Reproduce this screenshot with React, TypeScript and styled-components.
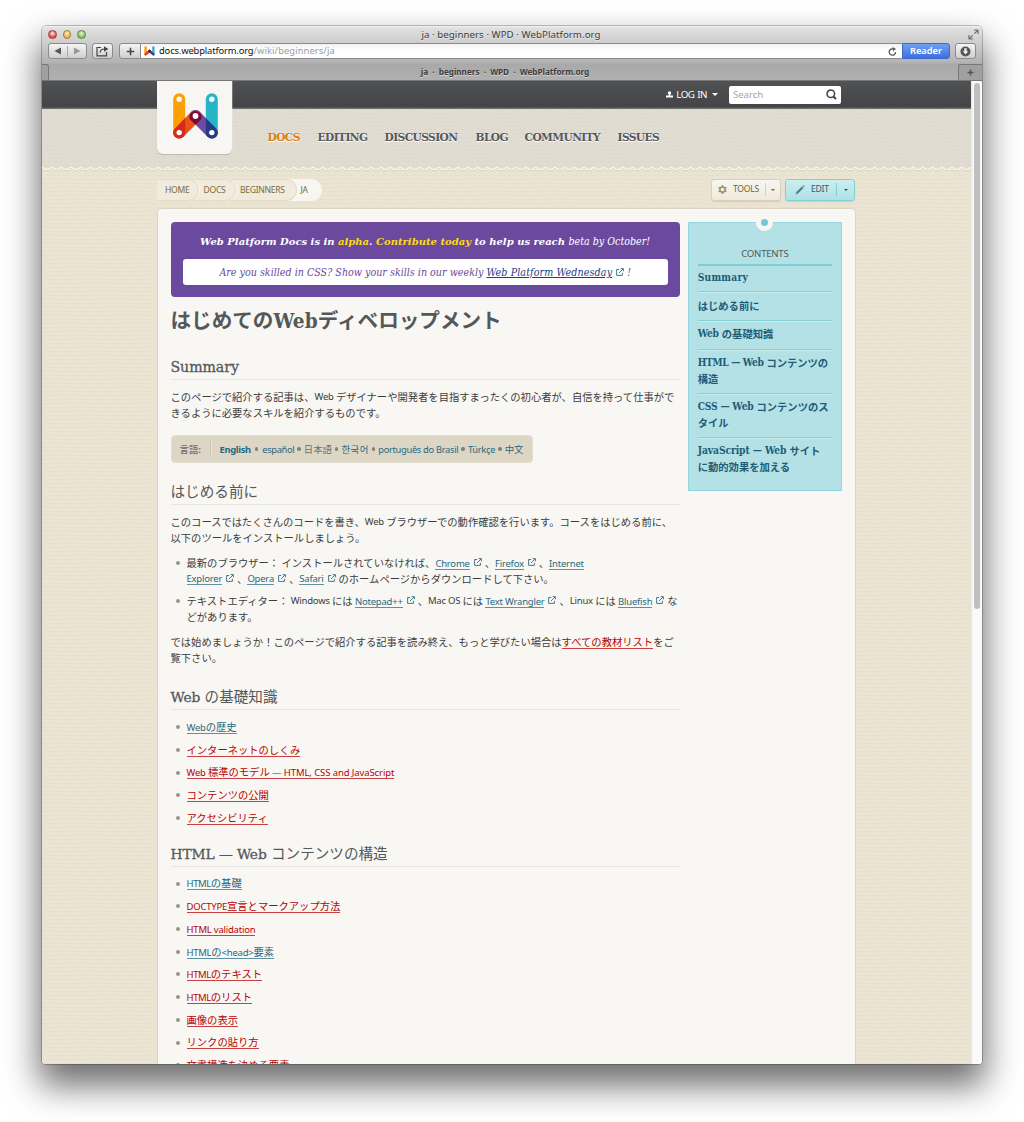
import React from 'react';
import styled, { createGlobalStyle, css } from 'styled-components';

const sans = `"Noto Sans", "Noto Sans CJK JP", sans-serif`;
const slab = `"DejaVu Serif Condensed", "DejaVu Serif", "Noto Sans CJK JP", serif`;
const wideSlab = `"DejaVu Serif", "Noto Sans CJK JP", serif`;
const weave = `repeating-linear-gradient(0deg, rgba(120,100,50,.026) 0 1px, transparent 1px 4px),
  repeating-linear-gradient(45deg, rgba(255,255,255,.1) 0 1px, transparent 1px 3px)`;

const Global = createGlobalStyle`
  html, body { margin: 0; background: #fff; }
  body { height: 1122px; overflow: hidden; font-family: ${sans}; }
  * { box-sizing: border-box; }
  svg { display: block; flex: none; }
`;

type T = { $s?: number; $ls?: number; $b?: boolean };
const Lat = styled.span<T>`
  font-family: ${sans};
  font-size: ${p => p.$s ?? 9.5}px;
  letter-spacing: ${p => p.$ls ?? -0.22}px;
  font-weight: ${p => (p.$b ? 700 : 'inherit')};
`;
const Slab = styled.span<T>`
  font-family: ${slab};
  font-stretch: condensed;
  font-size: ${p => p.$s ?? 10.2}px;
  letter-spacing: ${p => p.$ls ?? -0.2}px;
`;
const HeadSlab = styled.span<T>`
  font-family: ${wideSlab};
  font-stretch: normal;
  font-size: ${p => p.$s ?? 13.8}px;
  letter-spacing: ${p => p.$ls ?? -0.1}px;
  -webkit-text-stroke: 0.3px #55585a;
`;

const Stage = styled.div`
  padding: 26px 42px 0;
  height: 1122px;
`;
const Win = styled.div`
  width: 940px;
  height: 1038px;
  border-radius: 4px 4px 3px 3px;
  overflow: hidden;
  display: flex;
  flex-direction: column;
  box-shadow: 0 0 0 0.5px rgba(0,0,0,.45), 0 19px 34px 3px rgba(0,0,0,.57);
  background: #fff;
`;
const Chrome = styled.div`
  height: 55px;
  flex: none;
  background: linear-gradient(#f2f2f2 0, #e0e0e0 2px, #cdcdcd 17px, #b2b2b2 37px, #a9a9a9 38px, #b0b0b0 54px);
  border-bottom: 1px solid #777;
`;
const TitleRow = styled.div`
  height: 17px;
  display: grid;
  grid-template-columns: 60px 1fr 60px;
  align-items: center;
  padding: 0 3px 0 6px;
`;
const Lights = styled.div`display: flex; gap: 6px;`;
const Light = styled.i<{ $c: string; $d: string }>`
  width: 8.6px;
  height: 8.6px;
  border-radius: 50%;
  border: 1px solid ${p => p.$d};
  background: radial-gradient(circle at 50% 35%, #fff9 0, ${p => p.$c} 65%);
`;
const WinTitle = styled.div<T>`
  text-align: center;
  padding-right: 5px;
  font: ${p => (p.$b ? 700 : 400)} ${p => p.$s}px/15px ${sans};
  letter-spacing: ${p => p.$ls}px;
  color: #3c3c3c;
  text-shadow: 0 1px 0 #fff8;
  white-space: pre;
`;
const FullScreen = styled.svg`justify-self: end;`;
const ToolRow = styled.div`
  display: flex;
  height: 21px;
  align-items: flex-start;
  padding: 0 6px;
`;
const btn = css`
  display: flex;
  align-items: center;
  justify-content: center;
  height: 16px;
  border: 1px solid #8b8b8b;
  background: linear-gradient(#f4f4f4, #cfcfcf);
`;
const Btn = styled.div<{ $w: number; $ml?: number; $left?: boolean }>`
  ${btn}
  width: ${p => p.$w}px;
  margin-left: ${p => p.$ml ?? 0}px;
  border-radius: ${p => (p.$left ? '3px 0 0 3px' : '3px')};
`;
const Half = styled.div<{ $line?: boolean }>`
  flex: 1;
  height: 11px;
  display: flex;
  align-items: center;
  justify-content: center;
  border-left: ${p => (p.$line ? '1px solid #aaa' : '0')};
`;
const Address = styled.div`
  flex: 1;
  height: 16px;
  border: solid #8b8b8b;
  border-width: 1px 0;
  background: linear-gradient(#f2f2f2, #fff 6px);
  display: flex;
  align-items: center;
  padding: 0 5px 0 3px;
  gap: 4px;
  font: 9.4px/14px ${sans};
  letter-spacing: -0.15px;
  color: #111;
`;
const Path = styled.span`color: #9c9c9c; letter-spacing: 0.08px;`;
const Url = styled.div`flex: 1; white-space: nowrap;`;
const Reader = styled.div`
  width: 48px;
  height: 16px;
  background: linear-gradient(#6f9ff2, #3d6fdd);
  border: 1px solid #3e69c9;
  border-radius: 0 3px 3px 0;
  color: #fff;
  font: 600 9.3px/14px ${sans};
  text-align: center;
`;
const TabRow = styled.div`
  height: 16px;
  display: grid;
  grid-template-columns: 7px 1fr 24px;
`;
const TabTitle = styled(WinTitle)`padding: 0 0 0 3px;`;
const TabEdge = styled.div<{ $right?: boolean }>`
  border: 1px solid #777;
  border-width: ${p => (p.$right ? '1px 0 0 1px' : '1px 1px 0 0')};
  border-radius: ${p => (p.$right ? '3px 0 0 0' : '0 3px 0 0')};
  background: #a0a0a0;
  display: flex;
  align-items: center;
  justify-content: center;
`;
const View = styled.div`
  flex: 1;
  min-height: 0;
  display: flex;
  overflow: hidden;
`;
const Page = styled.div`
  width: 929px;
  background: ${weave}, #eae3d1;
  overflow: hidden;
`;
const Scroll = styled.div`
  width: 11px;
  background: linear-gradient(90deg, #e4e4e4, #fafafa 2px);
  padding: 2px 2px 0 3px;
`;
const Thumb = styled.div`height: 526px; width: 6px; border-radius: 3px; background: #bfbfbf;`;

const Header = styled.header`
  height: 85px;
  display: flex;
  padding-left: 115px;
  background: linear-gradient(#515254, #434446 26px, #6b6b6b 27px, #6b6b6b 28px, transparent 28px), ${weave}, #e0dbd0;
`;
const LogoCard = styled.div`
  width: 75px;
  height: 72.5px;
  background: #f8f6f2;
  border-radius: 0 0 6px 6px;
  box-shadow: 0 1px 1px rgba(0,0,0,.16), 1px 0 0 rgba(255,255,255,.25);
  display: flex;
  justify-content: center;
  padding: 12px 0 0 1px;
`;
const HeadCol = styled.div`flex: 1; display: flex; flex-direction: column;`;
const TopRow = styled.div`
  height: 27px;
  display: flex;
  justify-content: flex-end;
  align-items: center;
  padding-right: 130px;
  color: #fff;
`;
const Search = styled.div`
  width: 112px;
  height: 18px;
  margin-left: 11px;
  background: #fff;
  border-radius: 2px;
  display: flex;
  align-items: center;
  justify-content: space-between;
  padding: 0 4px 0 4px;
  font: 9.6px/18px ${sans};
  letter-spacing: -0.05px;
  color: #a5a5a5;
`;
const Login = styled.div`
  display: flex;
  align-items: center;
  gap: 3px;
  font: 9.8px/18px ${sans};
  letter-spacing: -0.55px;
  word-spacing: 1px;
`;
const LoginText = styled.span`margin-right: 2px;`;
const Caret = styled.i<{ $c: string; $s?: number }>`
  width: 0;
  height: 0;
  border: ${p => p.$s ?? 3}px solid transparent;
  border-top-color: ${p => p.$c};
  border-bottom: 0;
`;
const Nav = styled.nav`
  display: flex;
  padding: 20px 0 0 35.5px;
  gap: 18px;
`;
const NavItem = styled.a<{ $on?: boolean; $w: number }>`
  width: ${p => p.$w}px;
  white-space: nowrap;
  font: 700 11.8px/18px ${slab};
  font-stretch: condensed;
  letter-spacing: -0.56px;
  color: ${p => (p.$on ? '#d6820d' : '#55585a')};
  text-shadow: 0 1px 0 #fff;
`;
const SubRow = styled.div`
  display: flex;
  justify-content: space-between;
  width: 698px;
  margin: 7px 0 0 115px;
  height: 22px;
`;
const Crumbs = styled.div`display: flex; height: 22px;`;
const Crumb = styled.a<{ $w: number; $z: number; $last?: boolean; $pl: number }>`
  position: relative;
  z-index: ${p => p.$z};
  width: ${p => p.$w}px;
  margin-right: -10px;
  height: 22px;
  padding-left: ${p => p.$pl}px;
  border-radius: 2px 11px 11px 2px;
  background: ${p => (p.$last ? '#f8f6f1' : '#f0ebdd')};
  border: 1px solid ${p => (p.$last ? '#f8f6f1' : '#e5dcc6')};
  border-left: 0;
  box-shadow: ${p => (p.$last ? 'none' : '1px 0 0 #f8f6f1')};
  font: 8.6px/21px ${sans};
  letter-spacing: -0.3px;
  color: #7a6c41;
`;
const Buttons = styled.div`display: flex; gap: 4px;`;
const Action = styled.div<{ $blue?: boolean }>`
  width: 70px;
  height: 21.5px;
  border-radius: 3px;
  border: 1px solid ${p => (p.$blue ? '#7fd0d6' : '#d8d0bb')};
  background: ${p => (p.$blue ? 'linear-gradient(#cdeef0,#afe1e5)' : 'linear-gradient(#f8f6f1,#efeadc)')};
  box-shadow: 0 1px 1px rgba(0,0,0,.1);
  color: ${p => (p.$blue ? '#2f5c66' : '#6f6338')};
  display: flex;
  align-items: center;
  padding-left: ${p => (p.$blue ? 9 : 6)}px;
  gap: 6px;
  font: 8.6px/19px ${sans};
  letter-spacing: -0.25px;
`;
const Split = styled.div<{ $c: string }>`
  margin-left: auto;
  width: 18px;
  height: 13px;
  border-left: 1px solid ${p => p.$c};
  display: flex;
  align-items: center;
  justify-content: center;
`;
const Card = styled.div`
  width: 699px;
  height: 900px;
  margin: 7px 0 0 114.5px;
  background: #f8f7f3;
  border: 1px solid #d9d4c4;
  border-radius: 4px 4px 0 0;
  padding: 13px 13px 0 13px;
  display: flex;
  gap: 8px;
`;
const Main = styled.main`width: 510px; color: #3c3c3c;`;
const Banner = styled.div`
  height: 75px;
  border-radius: 4px;
  background: #6a499f;
  padding: 7px 12px 0;
  text-align: center;
  font-style: italic;
  color: #fff;
`;
const BannerLine = styled.div`height: 20px; line-height: 20px; white-space: nowrap;`;
const Strong = styled.b`font-family: ${wideSlab}; font-size: 10px;`;
const Inner = styled.div`
  margin-top: 10px;
  height: 26px;
  line-height: 26px;
  border-radius: 3px;
  background: #fff;
  color: #6a499f;
  display: flex;
  justify-content: center;
  align-items: center;
  white-space: pre;
`;
const BannerLink = styled(Slab)`color: #263a86; text-decoration: underline;`;
const Yellow = styled.span`color: #ffdb0c;`;
const H1 = styled.h1`
  margin: 8px 0 0;
  font: 700 20.6px/30px ${sans};
  color: #55585a;
  white-space: nowrap;
`;
const H2 = styled.h2<{ $mt: number }>`
  margin: ${p => p.$mt}px 0 0;
  height: 25px;
  border-bottom: 1px solid #e6e5e3;
  font: 400 14.6px/21px "Noto Sans CJK JP", sans-serif;
  color: #55585a;
  white-space: nowrap;
`;
const P = styled.p<{ $mt: number }>`
  margin: ${p => p.$mt}px 0 0;
  font: 10.3px/15.5px "Noto Sans CJK JP", sans-serif;
  white-space: nowrap;
`;
const Line = styled.span`display: flex; align-items: center; height: 15.5px; white-space: pre;`;
const Ul = styled.ul<{ $mt: number }>`
  margin: ${p => p.$mt}px 0 0;
  padding: 0;
  list-style: none;
`;
const Li = styled.li`
  display: flex;
  gap: 6.5px;
  padding-left: 5.5px;
  margin-bottom: 7.22px;
  font: 10.3px/15.5px "Noto Sans CJK JP", sans-serif;
  &::before {
    content: '';
    flex: none;
    width: 4px;
    height: 4px;
    margin-top: 6px;
    border-radius: 50%;
    background: #99948a;
  }
`;
const Link = styled.a<{ $red?: boolean }>`
  height: 14px;
  line-height: 14px;
  color: ${p => (p.$red ? '#ba0000' : '#28687f')};
  border-bottom: 1px solid ${p => (p.$red ? '#c84040' : '#5c91a3')};
`;
const Langs = styled.div`
  margin-top: 15px;
  width: 362px;
  height: 28px;
  border-radius: 4px;
  background: #ddd6c5;
  border: 1px solid #e4dfd1;
  display: flex;
  align-items: center;
  padding-left: 8px;
  color: #6f6d68;
  font: 9.4px/16px "Noto Sans CJK JP", sans-serif;
  white-space: pre;
`;
const LangLabel = styled.div`
  font-weight: 500;
  width: 31px;
  margin-right: 9px;
  border-right: 1px solid #c9c2af;
  box-shadow: 1px 0 0 #ece7da;
`;
const LA = styled.a`color: #28687f;`;
const Korean = styled(LA)`letter-spacing: 0.4px;`;
const Dot = styled.i<{ $w?: number }>`
  width: ${p => p.$w ?? 9.6}px;
  display: flex;
  justify-content: center;
  &::before { content: ''; width: 3.4px; height: 3.4px; border-radius: 50%; background: #85817a; }
`;
const Aside = styled.aside`
  width: 154px;
  height: 269px;
  background: #b3e1e5;
  border: 1.5px solid #93d6df;
  padding: 0 8.5px 0 9px;
  color: #1e5c77;
`;
const Pin = styled.div`
  width: 17px;
  height: 17px;
  margin: -9px auto 0;
  border-radius: 50%;
  background: #f8f7f3;
  display: flex;
  align-items: center;
  justify-content: center;
  &::after { content: ''; width: 7px; height: 7px; border-radius: 50%; background: #74cad1; }
`;
const AsideTitle = styled.div`
  margin-top: 14px;
  height: 21px;
  text-align: center;
  font: 9.6px/18px ${sans};
  letter-spacing: -0.25px;
  color: #55585a;
  border-bottom: 2px solid #7ccfd5;
`;
const Toc = styled.div<{ $h: number; $end?: boolean }>`
  height: ${p => p.$h}px;
  border-bottom: ${p => (p.$end ? 0 : 1)}px solid #86cfd5;
  box-shadow: ${p => (p.$end ? 'none' : '0 1px 0 #c9ecee')};
  display: flex;
  flex-direction: column;
  justify-content: center;
  padding-bottom: 1px;
  font: 700 10.3px/15.3px "Noto Sans CJK JP", sans-serif;
  white-space: pre;
`;
const TocLine = styled.span`display: flex; align-items: center; height: 15.3px;`;

const Mark = ({ w, h }: { w: number; h: number }) => (
  <svg width={w} height={h} viewBox="0 0 45 46">
    <g strokeWidth="12" strokeLinecap="round" fill="none">
      <path d="M6.2 6.3V39.6" stroke="#fb9f07" />
      <path d="M38.8 6.3V39.6" stroke="#25b5c6" />
      <path d="M6.2 39.6L22.5 23" stroke="#ea5218" />
      <path d="M38.8 39.6L22.5 23" stroke="#6c4ba2" />
    </g>
    <path d="M0.2 39.6a6 6 0 0 1 1.8-4.2L12.2 25.3V39.6a6 6 0 0 1-12 0z" fill="#d42a20" />
    <path d="M44.8 39.6a6 6 0 0 0-1.8-4.2L32.8 25.3V39.6a6 6 0 0 0 12 0z" fill="#263a86" />
    <path d="M22.5 31.8L16.6 26A6.2 6.2 0 1 1 28.4 26z" fill="#7d0a30" />
    <g fill="#fff">
      <circle cx="6.2" cy="6.3" r="2.7" />
      <circle cx="38.8" cy="6.3" r="2.7" />
      <circle cx="22.5" cy="23" r="2.9" />
      <circle cx="6.2" cy="39.6" r="2.7" />
      <circle cx="38.8" cy="39.6" r="2.7" />
    </g>
  </svg>
);

const Favicon = () => (
  <svg width="11" height="10" viewBox="0 0 11 10" fill="none" strokeWidth="2.4" strokeLinecap="round">
    <path d="M1.6 1.4V8" stroke="#fb9f07" />
    <path d="M9.4 1.4V8" stroke="#25b5c6" />
    <path d="M1.6 8.4L5.5 5" stroke="#e0401c" />
    <path d="M9.4 8.4L5.5 5" stroke="#3c4092" />
    <circle cx="5.5" cy="5" r="1" stroke="#7d0a30" strokeWidth="1" />
  </svg>
);

const ExtBox = styled.span`display: inline-flex; align-items: center; padding: 0 3px 1px 4px;`;
const Ext = () => (
  <ExtBox>
    <svg width="8" height="8" viewBox="0 0 8 8" fill="none" stroke="#37788c" strokeWidth="0.95">
      <path d="M3.2 1.5H.6V7.4H6.4V4.8" />
      <path d="M3 5L7 1M4.7.6H7.4V3.3" />
    </svg>
  </ExtBox>
);
const E = ({ children, ls }: { children: string; ls?: number }) => (
  <><Link><Lat $ls={ls}>{children}</Lat></Link><Ext /></>
);

const Scallop = () => (
  <svg width="929" height="6">
    <defs>
      <pattern id="scallop" width="9.68" height="6" patternUnits="userSpaceOnUse">
        <path d="M0 0H9.68V1.2Q4.84 6.4 0 1.2z" fill="#dfdbce" />
        <path d="M0 2Q4.84 7.2 9.68 2" fill="none" stroke="#cfc8b6" strokeWidth="0.8" />
        <path d="M0 1Q4.84 6.2 9.68 1" fill="none" stroke="#f8f6f0" strokeWidth="1.3" />
      </pattern>
    </defs>
    <rect width="929" height="6" fill="url(#scallop)" />
  </svg>
);

const Item = ({ red, children }: { red?: boolean; children: React.ReactNode }) => (
  <Li><Line><Link $red={red}>{children}</Link></Line></Li>
);

export default function App() {
  return (
    <Stage>
      <Global />
      <Win>
        <Chrome>
          <TitleRow>
            <Lights>
              <Light $c="#e8463f" $d="#a83a36" />
              <Light $c="#f3b13c" $d="#a97b34" />
              <Light $c="#7cc04f" $d="#5b8a43" />
            </Lights>
            <WinTitle $s={9.7} $ls={0.06}>ja · beginners · WPD · WebPlatform.org</WinTitle>
            <FullScreen width="11" height="11" viewBox="0 0 11 11" fill="none" stroke="#707070" strokeWidth="1.2">
              <path d="M6 1H10V5M10 1L6.3 4.7M5 10H1V6M1 10L4.7 6.3" />
            </FullScreen>
          </TitleRow>
          <ToolRow>
            <Btn $w={39}>
              <Half><svg width="8" height="8"><path d="M7 .5V7.5L.5 4z" fill="#555" /></svg></Half>
              <Half $line><svg width="8" height="8"><path d="M1 .5V7.5L7.5 4z" fill="#999" /></svg></Half>
            </Btn>
            <Btn $w={21} $ml={5}>
              <svg width="13" height="12" viewBox="0 0 13 12" fill="none" stroke="#444" strokeWidth="1.2">
                <path d="M5 2.5H1V10.8H10.5V7" /><path d="M4 7.5Q4.5 4 8.5 4" /><path d="M8 1.2L12.4 4L8 6.8z" fill="#444" stroke="none" />
              </svg>
            </Btn>
            <Btn $w={22} $ml={6} $left>
              <svg width="9" height="9"><path d="M4.5 .8V8.2M.8 4.5H8.2" stroke="#444" strokeWidth="1.5" /></svg>
            </Btn>
            <Address>
              <Favicon />
              <Url>docs.webplatform.org<Path>/wiki/beginners/ja</Path></Url>
              <svg width="9" height="9" viewBox="0 0 9 9" fill="none" stroke="#555" strokeWidth="1.3">
                <path d="M7.6 5A3.2 3.2 0 1 1 5.5 2" /><path d="M4.6 0L8 1.9L5 4.2z" fill="#555" stroke="none" />
              </svg>
            </Address>
            <Reader>Reader</Reader>
            <Btn $w={21} $ml={5}>
              <svg width="11" height="11" viewBox="0 0 11 11">
                <circle cx="5.5" cy="5.5" r="5" fill="#555" /><path d="M4.3 2.3H6.7V5.3H8.3L5.5 8.5L2.7 5.3H4.3z" fill="#eee" />
              </svg>
            </Btn>
          </ToolRow>
          <TabRow>
            <TabEdge />
            <TabTitle $s={8.2} $ls={-0.03} $b>ja  ·  beginners  ·  WPD  ·  WebPlatform.org</TabTitle>
            <TabEdge $right><svg width="7" height="7"><path d="M3.5 .5V6.5M.5 3.5H6.5" stroke="#555" strokeWidth="1.5" /></svg></TabEdge>
          </TabRow>
        </Chrome>
        <View>
          <Page>
            <Header>
              <LogoCard><Mark w={45} h={46} /></LogoCard>
              <HeadCol>
                <TopRow>
                  <Login>
                    <svg width="7" height="7" viewBox="0 0 7 7" fill="#fff"><circle cx="3.5" cy="2" r="1.7" /><path d="M2.8 3H4.2V4.6H7V6.4H0V4.6H2.8z" /></svg>
                    <LoginText>LOG IN</LoginText>
                    <Caret $c="#fff" $s={3.5} />
                  </Login>
                  <Search>
                    Search
                    <svg width="11" height="11" viewBox="0 0 11 11" fill="none" stroke="#444" strokeWidth="1.5"><circle cx="4.8" cy="4.8" r="3.8" /><path d="M7.5 7.5L10 10" strokeWidth="1.9" /></svg>
                  </Search>
                </TopRow>
                <Nav>
                  <NavItem $on $w={32}>DOCS</NavItem>
                  <NavItem $w={49}>EDITING</NavItem>
                  <NavItem $w={73}>DISCUSSION</NavItem>
                  <NavItem $w={31}>BLOG</NavItem>
                  <NavItem $w={75}>COMMUNITY</NavItem>
                  <NavItem $w={43}>ISSUES</NavItem>
                </Nav>
              </HeadCol>
            </Header>
            <Scallop />
            <SubRow>
              <Crumbs>
                <Crumb $w={42} $z={4} $pl={8}>HOME</Crumb>
                <Crumb $w={46.5} $z={3} $pl={14.5}>DOCS</Crumb>
                <Crumb $w={71} $z={2} $pl={14.5}>BEGINNERS</Crumb>
                <Crumb $w={35.5} $z={1} $pl={14} $last>JA</Crumb>
              </Crumbs>
              <Buttons>
                <Action>
                  <svg width="9" height="9" viewBox="0 0 9 9" fill="none" stroke="#9b8e63"><circle cx="4.5" cy="4.5" r="2.6" strokeWidth="1.5" /><path d="M4.5 0V1.6M4.5 7.4V9M.6 2.3L2 3.1M7 5.9L8.4 6.7M.6 6.7L2 5.9M7 3.1L8.4 2.3" strokeWidth="1.5" /></svg>
                  TOOLS
                  <Split $c="#d8d0bb"><Caret $c="#6f6338" $s={2.5} /></Split>
                </Action>
                <Action $blue>
                  <svg width="10" height="10" viewBox="0 0 10 10"><path d="M.6 9.4L1.4 7L6.8 1.6L8.4 3.2L3 8.6zM7.4 1L8.1.4Q9 .2 9.5 1.1L9 2.6z" fill="#4d838b" /></svg>
                  EDIT
                  <Split $c="#7fd0d6"><Caret $c="#22525c" $s={2.5} /></Split>
                </Action>
              </Buttons>
            </SubRow>
            <Card>
              <Main>
                <Banner>
                  <BannerLine>
                    <Strong>Web Platform Docs is in <Yellow>alpha</Yellow>. <Yellow>Contribute today</Yellow> to help us reach </Strong>
                    <Slab $s={10.6} $ls={0}>beta by October!</Slab>
                  </BannerLine>
                  <Inner>
                    <Slab $s={10.6} $ls={0.02}>Are you skilled in CSS? Show your skills in our weekly </Slab>
                    <BannerLink $s={10.6} $ls={0.12}>Web Platform Wednesday</BannerLink>
                    <Ext /><Slab $s={10.6}>!</Slab>
                  </Inner>
                </Banner>
                <H1>はじめての<Slab $s={20.6} $ls={0.15}>Web</Slab>ディベロップメント</H1>
                <H2 $mt={19}><HeadSlab $s={14.2}>Summary</HeadSlab></H2>
                <P $mt={9}>
                  <Line>このページで紹介する記事は、<Lat>Web </Lat>デザイナーや開発者を目指すまったくの初心者が、自信を持って仕事がで</Line>
                  <Line>きるように必要なスキルを紹介するものです。</Line>
                </P>
                <Langs>
                  <LangLabel>言語:</LangLabel>
                  <LA><Lat $b $s={9.3} $ls={-0.3}>English</Lat></LA>
                  <Dot $w={11.5} />
                  <LA><Lat $s={9.3} $ls={-0.35}>español</Lat></LA>
                  <Dot />日本語<Dot />
                  <Korean>한국어</Korean>
                  <Dot />
                  <LA><Lat $s={9.3} $ls={-0.3}>português do Brasil</Lat></LA>
                  <Dot />
                  <LA><Lat $s={9.3} $ls={-0.3}>Türkçe</Lat></LA>
                  <Dot />
                  <LA>中文</LA>
                </Langs>
                <H2 $mt={17}>はじめる前に</H2>
                <P $mt={9}>
                  <Line>このコースではたくさんのコードを書き、<Lat>Web </Lat>ブラウザーでの動作確認を行います。コースをはじめる前に、</Line>
                  <Line>以下のツールをインストールしましょう。</Line>
                </P>
                <Ul $mt={10}>
                  <Li>
                    <div>
                      <Line>最新のブラウザー： インストールされていなければ、<E>Chrome</E>、<E>Firefox</E>、<Link><Lat>Internet</Lat></Link></Line>
                      <Line><E>Explorer</E>、<E>Opera</E>、<E>Safari</E>のホームページからダウンロードして下さい。</Line>
                    </div>
                  </Li>
                  <Li>
                    <div>
                      <Line>テキストエディター： <Lat>Windows </Lat>には <E>Notepad++</E>、<Lat>Mac OS </Lat>には <E>Text Wrangler</E>、<Lat>Linux </Lat>には <E>Bluefish</E>な</Line>
                      <Line>どがあります。</Line>
                    </div>
                  </Li>
                </Ul>
                <P $mt={10}>
                  <Line>では始めましょうか！このページで紹介する記事を読み終え、もっと学びたい場合は<Link $red>すべての教材リスト</Link>をご</Line>
                  <Line>覧下さい。</Line>
                </P>
                <H2 $mt={20}><HeadSlab>Web </HeadSlab>の基礎知識</H2>
                <Ul $mt={9}>
                  <Item><Lat>Web</Lat>の歴史</Item>
                  <Item red>インターネットのしくみ</Item>
                  <Item red><Lat>Web </Lat>標準のモデル<Lat $ls={-0.1}> — HTML, CSS and JavaScript</Lat></Item>
                  <Item red>コンテンツの公開</Item>
                  <Item red>アクセシビリティ</Item>
                </Ul>
                <H2 $mt={16}><HeadSlab>HTML — Web </HeadSlab>コンテンツの構造</H2>
                <Ul $mt={9}>
                  <Item><Lat $ls={-0.4}>HTML</Lat>の基礎</Item>
                  <Item red><Lat>DOCTYPE</Lat>宣言とマークアップ方法</Item>
                  <Item red><Lat>HTML validation</Lat></Item>
                  <Item><Lat $ls={-0.3}>HTML</Lat>の<Lat>&lt;head&gt;</Lat>要素</Item>
                  <Item red><Lat $ls={-0.4}>HTML</Lat>のテキスト</Item>
                  <Item red><Lat $ls={-0.4}>HTML</Lat>のリスト</Item>
                  <Item red>画像の表示</Item>
                  <Item red>リンクの貼り方</Item>
                  <Item red>文書構造を決める要素</Item>
                </Ul>
              </Main>
              <Aside>
                <Pin />
                <AsideTitle>CONTENTS</AsideTitle>
                <Toc $h={26}><Slab $ls={0.22}>Summary</Slab></Toc>
                <Toc $h={28.5}>はじめる前に</Toc>
                <Toc $h={29}><TocLine><Slab>Web </Slab>の基礎知識</TocLine></Toc>
                <Toc $h={44}><TocLine><Slab $ls={-0.35}>HTML — Web </Slab>コンテンツの</TocLine><TocLine>構造</TocLine></Toc>
                <Toc $h={44}><TocLine><Slab>CSS — Web </Slab>コンテンツのス</TocLine><TocLine>タイル</TocLine></Toc>
                <Toc $h={43} $end><TocLine><Slab $ls={-0.08}>JavaScript — Web </Slab>サイト</TocLine><TocLine>に動的効果を加える</TocLine></Toc>
              </Aside>
            </Card>
          </Page>
          <Scroll><Thumb /></Scroll>
        </View>
      </Win>
    </Stage>
  );
}
